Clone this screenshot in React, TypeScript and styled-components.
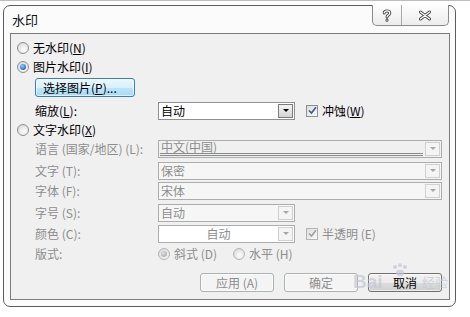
import React from 'react'
import styled, { createGlobalStyle } from 'styled-components'

const GlobalStyle = createGlobalStyle`
  html, body {
    margin: 0;
    padding: 0;
    background: #ffffff;
  }
  body {
    font-family: 'Noto Sans CJK SC', 'Noto Sans', sans-serif;
    font-size: 12px;
    color: #000;
  }
`

const Page = styled.div`
  width: 470px;
  height: 317px;
  box-sizing: border-box;
  border-top: 1px solid #bdbdbd;
  padding: 4px 0 0 3px;
  position: relative;
  overflow: hidden;
`

const Frame = styled.div`
  width: 453px;
  height: 302px;
  box-sizing: border-box;
  border: 1px solid #5c5c5c;
  border-radius: 7px;
  background: #fbfbfb;
  padding: 0 5px 6px 6px;
  display: flex;
  flex-direction: column;
`

const TitleBar = styled.div`
  height: 27px;
  display: flex;
  justify-content: space-between;
  align-items: flex-start;
`

const Title = styled.div`
  padding: 6px 0 0 2px;
  font-size: 13px;
  line-height: 16px;
  color: #111;
`

const CaptionGroup = styled.div`
  margin: -1px 1px 0 0;
  height: 20px;
  display: flex;
  border: 1px solid #8a8a8a;
  border-top: none;
  border-radius: 0 0 5px 5px;
  background: linear-gradient(#fdfdfd, #ececec);
  overflow: hidden;
`

const CaptionButton = styled.div<{ $w: number; $sep?: boolean }>`
  width: ${(p) => p.$w}px;
  height: 100%;
  display: flex;
  align-items: center;
  justify-content: center;
  border-right: ${(p) => (p.$sep ? '1px solid #a8a8a8' : 'none')};
`

const Client = styled.div`
  flex: 1;
  background: #f0f0f0;
  border: 1px solid #7b7b7b;
  padding: 4px 0 0 6px;
  display: flex;
  flex-direction: column;
`

const Row = styled.div<{ $h: number; $indent?: number }>`
  display: flex;
  align-items: center;
  height: ${(p) => p.$h}px;
  padding-left: ${(p) => p.$indent || 0}px;
`

const Text = styled.span<{ $disabled?: boolean }>`
  color: ${(p) => (p.$disabled ? '#8d8d8d' : '#000')};
  white-space: nowrap;
  line-height: 14px;
`

const Label = styled(Text)`
  width: 123px;
`

const Key = styled.span`
  text-decoration: underline;
`

const Spacer = styled.span<{ $w: number }>`
  width: ${(p) => p.$w}px;
  flex: none;
`

const RadioCircle = styled.span<{ $checked?: boolean; $disabled?: boolean }>`
  width: 12px;
  height: 12px;
  box-sizing: border-box;
  border-radius: 50%;
  border: 1px solid ${(p) => (p.$disabled ? '#b4b4b4' : '#8e8f8f')};
  background: radial-gradient(circle at 60% 65%, #f6f6f6 20%, #d6d6d6 90%);
  margin-right: 4px;
  display: flex;
  align-items: center;
  justify-content: center;
  flex: none;

  &::after {
    content: '';
    display: ${(p) => (p.$checked ? 'block' : 'none')};
    width: 6px;
    height: 6px;
    border-radius: 50%;
    background: ${(p) =>
      p.$disabled
        ? 'radial-gradient(circle at 40% 35%, #e0e0e0, #9a9a9a)'
        : 'radial-gradient(circle at 40% 35%, #8fd2ff, #1b5db4 80%)'};
  }
`

const CheckBox = styled.span<{ $disabled?: boolean }>`
  width: 12px;
  height: 12px;
  box-sizing: border-box;
  border: 1px solid ${(p) => (p.$disabled ? '#b4b4b4' : '#8e8f8f')};
  background: linear-gradient(135deg, #dcdcdc, #fbfbfb);
  margin-right: 4px;
  display: flex;
  align-items: center;
  justify-content: center;
  flex: none;
`

const PushButton = styled.div<{ $variant?: 'hot' | 'disabled' | 'normal'; $w: number }>`
  width: ${(p) => p.$w}px;
  height: 19px;
  box-sizing: border-box;
  border-radius: 3px;
  display: flex;
  align-items: center;
  justify-content: ${(p) => (p.$variant === 'hot' ? 'flex-start' : 'center')};
  padding-left: ${(p) => (p.$variant === 'hot' ? '7px' : '0')};
  white-space: nowrap;
  border: 1px solid
    ${(p) => (p.$variant === 'hot' ? '#3c7fb1' : p.$variant === 'disabled' ? '#adb2b5' : '#707070')};
  background: ${(p) =>
    p.$variant === 'hot'
      ? 'linear-gradient(#eaf6fd 0%, #d9f0fc 50%, #bee6fd 51%, #a7d9f5 100%)'
      : p.$variant === 'disabled'
        ? '#f4f4f4'
        : 'linear-gradient(#f2f2f2 0%, #ebebeb 50%, #dddddd 51%, #cfcfcf 100%)'};
  color: ${(p) => (p.$variant === 'disabled' ? '#8d8d8d' : '#000')};
  box-shadow: inset 0 0 0 1px rgba(255, 255, 255, 0.6);
`

const Combo = styled.div<{ $w: number; $disabled?: boolean; $bg?: string }>`
  width: ${(p) => p.$w}px;
  height: 18px;
  box-sizing: border-box;
  border: 1px solid ${(p) => (p.$disabled ? '#adadad' : '#8e8f8f')};
  background: ${(p) => p.$bg || '#fff'};
  display: flex;
  align-items: center;
  padding: 1px;
`

const ComboText = styled.div<{ $disabled?: boolean; $center?: boolean; $double?: boolean }>`
  flex: 1;
  height: 100%;
  box-sizing: border-box;
  padding-left: 1px;
  display: flex;
  align-items: center;
  justify-content: ${(p) => (p.$center ? 'center' : 'flex-start')};
  color: ${(p) => (p.$disabled ? '#8d8d8d' : '#000')};
  border-bottom: ${(p) => (p.$double ? '3px double #8a8a8a' : 'none')};
  white-space: nowrap;
  line-height: 14px;
`

const DropButton = styled.div<{ $disabled?: boolean }>`
  width: 15px;
  height: 14px;
  box-sizing: border-box;
  margin-left: 2px;
  border: 1px solid ${(p) => (p.$disabled ? '#d0d0d0' : '#7a7a7a')};
  background: ${(p) => (p.$disabled ? '#f4f4f4' : 'linear-gradient(#f4f4f4, #d4d4d4)')};
  display: flex;
  align-items: center;
  justify-content: center;

  &::after {
    content: '';
    border-left: 3px solid transparent;
    border-right: 3px solid transparent;
    border-top: 3px solid ${(p) => (p.$disabled ? '#a6a6a6' : '#000')};
  }
`

const ButtonBar = styled.div`
  display: flex;
  justify-content: flex-end;
  gap: 10px;
  margin-top: 7px;
  padding-right: 7px;
`

// Baidu Jingyan stamp lying over the bottom-right corner of the shot
const Watermark = styled.div`
  position: absolute;
  left: 353px;
  top: 262px;
  width: 96px;
  height: 32px;
  pointer-events: none;
  color: rgba(196, 198, 210, 0.7);
`

const WatermarkBrand = styled.span`
  position: absolute;
  left: 0;
  top: 9px;
  font-family: 'Liberation Sans', sans-serif;
  font-weight: bold;
  font-size: 19px;
  line-height: 20px;
`

const WatermarkPaw = styled.svg`
  position: absolute;
  left: 38px;
  top: 0;
`

const WatermarkSub = styled.span`
  position: absolute;
  left: 69px;
  top: 11px;
  font-size: 13px;
  line-height: 16px;
`

const Radio = ({ checked, disabled, children }: { checked?: boolean; disabled?: boolean; children: React.ReactNode }) => (
  <>
    <RadioCircle $checked={checked} $disabled={disabled} />
    <Text $disabled={disabled}>{children}</Text>
  </>
)

const Check = ({ disabled, children }: { disabled?: boolean; children: React.ReactNode }) => (
  <>
    <CheckBox $disabled={disabled}>
      <svg width='9' height='9' viewBox='0 0 9 9'>
        <path d='M1 4.5 L3.5 7 L8 1.2' fill='none' stroke={disabled ? '#a0a0a0' : '#3b55a0'} strokeWidth='1.6' />
      </svg>
    </CheckBox>
    <Text $disabled={disabled}>{children}</Text>
  </>
)

const HollowIcon = ({ d, w, h }: { d: string; w: number; h: number }) => (
  <svg width={w} height={h} viewBox={`0 0 ${w} ${h}`}>
    <path d={d} fill='none' stroke='#4a4a4a' strokeWidth='3' strokeLinecap='round' strokeLinejoin='round' />
    <path d={d} fill='none' stroke='#ffffff' strokeWidth='1.2' strokeLinecap='round' strokeLinejoin='round' />
  </svg>
)

export default function App() {
  return (
    <Page>
      <GlobalStyle />
      <Frame>
        <TitleBar>
          <Title>水印</Title>
          <CaptionGroup>
            <CaptionButton $w={28} $sep>
              <HollowIcon w={10} h={13} d='M2.2 4 C2.2 1.2 7.8 1.2 7.8 4 C7.8 6 5 6 5 8 M5 11 L5 11.2' />
            </CaptionButton>
            <CaptionButton $w={46}>
              <HollowIcon w={14} h={11} d='M2.5 2 L11.5 9 M11.5 2 L2.5 9' />
            </CaptionButton>
          </CaptionGroup>
        </TitleBar>
        <Client>
          <Row $h={19}>
            <Radio>
              无水印(<Key>N</Key>)
            </Radio>
          </Row>
          <Row $h={19}>
            <Radio checked>
              图片水印(<Key>I</Key>)
            </Radio>
          </Row>
          <Row $h={23} $indent={18}>
            <PushButton $variant='hot' $w={100}>
              选择图片(<Key>P</Key>)...
            </PushButton>
          </Row>
          <Row $h={23} $indent={18}>
            <Label>
              缩放(<Key>L</Key>):
            </Label>
            <Combo $w={137}>
              <ComboText>自动</ComboText>
              <DropButton />
            </Combo>
            <Spacer $w={11} />
            <Check>
              冲蚀(<Key>W</Key>)
            </Check>
          </Row>
          <Row $h={15}>
            <Radio>
              文字水印(<Key>X</Key>)
            </Radio>
          </Row>
          <Row $h={23} $indent={18}>
            <Label $disabled>语言 (国家/地区) (L):</Label>
            <Combo $w={284} $disabled $bg='#f0f0f0'>
              <ComboText $disabled $double>
                中文(中国)
              </ComboText>
              <DropButton $disabled />
            </Combo>
          </Row>
          <Row $h={21} $indent={18}>
            <Label $disabled>文字 (T):</Label>
            <Combo $w={284} $disabled $bg='#f6f6f6'>
              <ComboText $disabled>保密</ComboText>
              <DropButton $disabled />
            </Combo>
          </Row>
          <Row $h={19} $indent={18}>
            <Label $disabled>字体 (F):</Label>
            <Combo $w={284} $disabled $bg='#f6f6f6'>
              <ComboText $disabled>宋体</ComboText>
              <DropButton $disabled />
            </Combo>
          </Row>
          <Row $h={25} $indent={18}>
            <Label $disabled>字号 (S):</Label>
            <Combo $w={137} $disabled $bg='#f6f6f6'>
              <ComboText $disabled>自动</ComboText>
              <DropButton $disabled />
            </Combo>
          </Row>
          <Row $h={17} $indent={18}>
            <Label $disabled>颜色 (C):</Label>
            <Combo $w={137} $disabled>
              <ComboText $disabled $center>
                自动
              </ComboText>
              <DropButton $disabled />
            </Combo>
            <Spacer $w={11} />
            <Check disabled>半透明 (E)</Check>
          </Row>
          <Row $h={24} $indent={18}>
            <Label $disabled>版式:</Label>
            <Radio checked disabled>
              斜式 (D)
            </Radio>
            <Spacer $w={16} />
            <Radio disabled>水平 (H)</Radio>
          </Row>
          <ButtonBar>
            <PushButton $variant='disabled' $w={74}>
              应用 (A)
            </PushButton>
            <PushButton $variant='disabled' $w={74}>
              确定
            </PushButton>
            <PushButton $w={74}>取消</PushButton>
          </ButtonBar>
        </Client>
      </Frame>
      <Watermark>
        <WatermarkBrand>Bai</WatermarkBrand>
        <WatermarkPaw width='18' height='14' viewBox='0 0 18 14'>
          <g fill='rgba(196,198,210,0.7)'>
            <circle cx='4' cy='4' r='2' />
            <circle cx='9' cy='2.2' r='2' />
            <circle cx='14' cy='4' r='2' />
            <ellipse cx='9' cy='10' rx='4' ry='3.2' />
          </g>
        </WatermarkPaw>
        <WatermarkSub>经验</WatermarkSub>
      </Watermark>
    </Page>
  )
}
